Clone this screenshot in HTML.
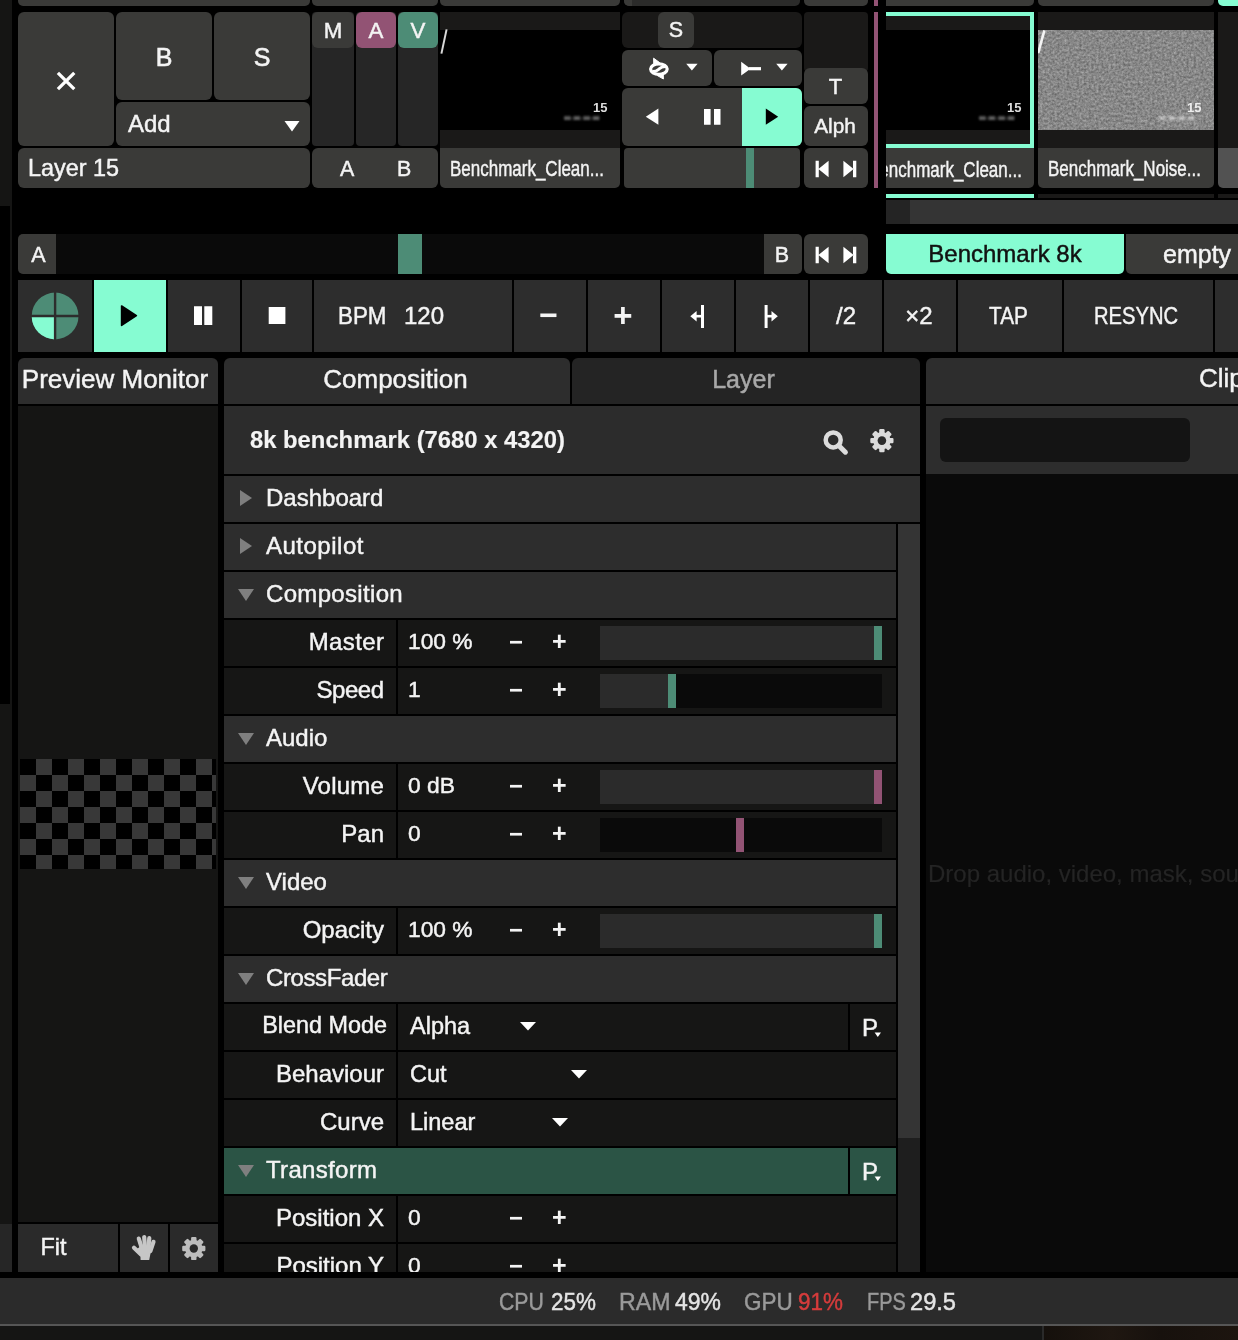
<!DOCTYPE html>
<html lang="en">
<head>
<meta charset="utf-8">
<title>Resolume Arena - 8k benchmark</title>
<style>
*{box-sizing:border-box;margin:0;padding:0}
html,body{width:1238px;height:1340px;background:#000;overflow:hidden}
body{will-change:transform;position:relative;font-family:"Liberation Sans",sans-serif;font-size:24px;color:#f4f4f4;line-height:1;-webkit-text-stroke:0.45px}
.ti{font-size:26px}
.a{position:absolute}
.c{display:flex;align-items:center;justify-content:center}
.l{display:flex;align-items:center;justify-content:flex-start}
.r{display:flex;align-items:center;justify-content:flex-end}
.btn{background:#3a3a38}
.dk{background:#1a1918}
.bar{background:#2d2d2d}
.row{background:#161615}
.mint{background:#86fcd2}
.grn{background:#4d8c76}
.pnk{background:#925374}
.r4{border-radius:6px}
.rb{border-radius:0 0 5px 5px}
.rt{border-radius:5px 5px 0 0}
.cond{display:inline-block;transform-origin:0 50%;white-space:nowrap}
svg{display:block}
.t{white-space:nowrap}
</style>
</head>
<body>
<!-- SECTION: left strip -->
<div class="a" style="left:0;top:0;width:12px;height:1340px;background:#151514"></div>
<div class="a" style="left:0;top:206px;width:10px;height:498px;background:#000"></div>
<div class="a" style="left:0;top:1224px;width:12px;height:48px;background:#262626"></div>
<!-- SECTION: top strip -->
<div class="a btn rb" style="left:18px;top:0;width:292px;height:6px"></div>
<div class="a btn rb" style="left:312px;top:0;width:126px;height:6px"></div>
<div class="a btn rb" style="left:440px;top:0;width:180px;height:6px"></div>
<div class="a rb" style="left:624px;top:0;width:176px;height:6px;background:#2b2b2a"></div>
<div class="a btn" style="left:624px;top:0;width:8px;height:6px;border-radius:0 0 0 5px"></div>
<div class="a btn rb" style="left:804px;top:0;width:64px;height:6px"></div>
<div class="a pnk" style="left:874px;top:0;width:4px;height:6px"></div>
<div class="a btn rb" style="left:886px;top:0;width:148px;height:6px;border-radius:0 0 5px 0"></div>
<div class="a btn rb" style="left:1038px;top:0;width:176px;height:6px"></div>
<div class="a mint" style="left:1218px;top:0;width:20px;height:6px;border-radius:0 0 0 5px"></div>
<!-- SECTION: layer -->
<div class="a btn r4" style="left:18px;top:12px;width:96px;height:134px">
<svg class="a" style="left:37px;top:58px" width="22" height="22" viewBox="0 0 22 22"><path d="M2.9 2.9 L19.3 19.1 M19.3 2.9 L2.9 19.1" stroke="#fff" stroke-width="3.3" fill="none"/></svg></div>
<div class="a btn r4 c t" style="left:116px;top:12px;width:96px;height:88px;font-size:25px;padding-top:3px;-webkit-text-stroke:0.6px">B</div>
<div class="a btn r4 c t" style="left:214px;top:12px;width:96px;height:88px;font-size:25px;padding-top:3px;-webkit-text-stroke:0.6px">S</div>
<div class="a btn r4 l t" style="left:116px;top:102px;width:194px;height:44px;padding-left:12px">Add
<svg class="a" style="left:168px;top:18px" width="16" height="12" viewBox="0 0 16 12"><path d="M0.5 1 H15.5 L8 11.5 Z" fill="#fff"/></svg></div>
<div class="a btn l t" style="left:18px;top:148px;width:292px;height:40px;padding:2px 0 0 10px;font-size:23.4px;border-radius:6px">Layer 15</div>
<div class="a" style="left:312px;top:12px;width:42px;height:134px;background:#262626;border-radius:4px"></div>
<div class="a" style="left:356px;top:12px;width:40px;height:134px;background:#262626;border-radius:4px"></div>
<div class="a" style="left:398px;top:12px;width:40px;height:134px;background:#262626;border-radius:4px"></div>
<div class="a btn r4 c t" style="left:312px;top:12px;width:42px;height:36px;font-size:22.3px;padding-top:2px">M</div>
<div class="a pnk r4 c t" style="left:356px;top:12px;width:40px;height:36px;font-size:22.3px;padding-top:2px">A</div>
<div class="a grn r4 c t" style="left:398px;top:12px;width:40px;height:36px;font-size:22.3px;padding-top:2px">V</div>
<div class="a btn t r4" style="left:312px;top:148px;width:126px;height:40px;font-size:21.4px">
<span class="a" style="left:28px;top:11px">A</span><span class="a" style="left:85px;top:11px">B</span></div>
<!-- layer thumb -->
<div class="a dk" style="left:440px;top:12px;width:180px;height:136px"></div>
<div class="a" style="left:440px;top:30px;width:180px;height:100px;background:#000"></div>
<div class="a t" style="left:593px;top:100px;font:700 13px 'Liberation Sans',sans-serif;color:#dcdcdc;filter:blur(.5px);-webkit-text-stroke:0">15</div>
<div class="a t" style="left:564px;top:115px;font:700 6px 'Liberation Mono',monospace;color:#aaa;filter:blur(.9px);-webkit-text-stroke:0;letter-spacing:-.4px">00:00:00:00</div>
<svg class="a" style="left:438px;top:27px" width="12" height="30" viewBox="438 27 12 30"><path d="M446.6 29.4 L441.4 53.6" stroke="#d8d8d8" stroke-width="2" filter="blur(.5px)"/></svg>
<div class="a btn l t" style="left:440px;top:148px;width:180px;height:40px;border-radius:0 0 5px 5px;padding:3px 0 0 10px;font-size:22.5px"><span class="cond" style="transform:scaleX(.755)">Benchmark_Clean...</span></div>
<!-- transport -->
<div class="a dk r4" style="left:622px;top:12px;width:180px;height:36px"></div>
<div class="a btn r4 c t" style="left:658px;top:12px;width:36px;height:36px;font-size:21.5px;padding-top:2px">S</div>
<div class="a btn r4" style="left:622px;top:50px;width:90px;height:36px"></div>
<div class="a btn r4" style="left:714px;top:50px;width:88px;height:36px"></div>
<div class="a btn r4" style="left:622px;top:88px;width:180px;height:58px"></div>
<div class="a mint" style="left:742px;top:88px;width:60px;height:58px;border-radius:0 6px 6px 0"></div>
<div class="a btn" style="left:624px;top:148px;width:176px;height:40px;border-radius:4px"></div>
<div class="a grn" style="left:746px;top:148px;width:8px;height:40px"></div>
<div class="a dk" style="left:804px;top:12px;width:64px;height:60px;border-radius:4px"></div>
<div class="a btn r4 c t" style="left:804px;top:68px;width:64px;height:36px;font-size:22px;padding-top:2px;padding-right:1px">T</div>
<div class="a btn r4 c t" style="left:804px;top:106px;width:64px;height:40px;font-size:20.8px;padding-top:1px;padding-right:2px">Alph</div>
<div class="a btn r4" style="left:804px;top:148px;width:64px;height:40px"></div>
<div class="a pnk" style="left:874px;top:12px;width:4px;height:176px"></div>
<!-- icons: transport -->
<svg class="a" style="left:646px;top:56px" width="26" height="26" viewBox="646 56 26 26"><ellipse cx="658.9" cy="69.1" rx="8.3" ry="5.3" fill="none" stroke="#fff" stroke-width="3.2"/><path d="M652.6 71.6 C656.4 71.4 657.6 70.2 658.9 69.1 C660.2 68 661.4 66.8 665.2 66.6" fill="none" stroke="#fff" stroke-width="3"/><path d="M653.6 58.2 L659.6 62.6 L653.8 65.8 Z M663.4 79 L657.4 75.6 L663.2 72.4 Z" fill="#fff" stroke="#fff" stroke-width="1" stroke-linejoin="round"/></svg>
<svg class="a" style="left:686px;top:63px" width="12" height="8" viewBox="0 0 12 8"><path d="M0.2 0.8 H11.6 L5.9 7.6 Z" fill="#fff"/></svg>
<svg class="a" style="left:740px;top:60px" width="22" height="18" viewBox="740 60 22 18"><path d="M741.2 61.8 L750.6 68.7 L741.2 75.6 Z" fill="#fff"/><path d="M749 68.7 H761" stroke="#fff" stroke-width="3.2"/></svg>
<svg class="a" style="left:776px;top:63px" width="12" height="8" viewBox="0 0 12 8"><path d="M0.2 0.8 H11.6 L5.9 7.6 Z" fill="#fff"/></svg>
<svg class="a" style="left:644px;top:107px" width="16" height="20" viewBox="644 107 16 20"><path d="M658.4 108.6 V124.8 L645.8 116.7 Z" fill="#fff"/></svg>
<svg class="a" style="left:703px;top:108px" width="19" height="18" viewBox="703 108 19 18"><path d="M704 109 H710.6 V124.7 H704 Z M714 109 H720.5 V124.7 H714 Z" fill="#fff"/></svg>
<svg class="a" style="left:764px;top:107px" width="16" height="20" viewBox="764 107 16 20"><path d="M765.8 108.6 V124.8 L778.2 116.7 Z" fill="#000"/></svg>
<svg class="a" style="left:814px;top:159px" width="44" height="20" viewBox="814 159 44 20"><path d="M815.6 160.7 H818.8 V177.2 H815.6 Z M828.6 160.7 V177.2 L818.4 169 Z M853 160.7 H856.3 V177.2 H853 Z M843.4 160.7 V177.2 L853.6 169 Z" fill="#fff"/></svg>
<!-- SECTION: clips -->
<div class="a dk" style="left:886px;top:12px;width:148px;height:136px"></div>
<div class="a" style="left:886px;top:30px;width:148px;height:100px;background:#000"></div>
<div class="a" style="left:886px;top:12px;width:148px;height:136px;border:4px solid #86fcd2;border-left:0"></div>
<div class="a btn t" style="left:886px;top:148px;width:148px;height:40px;border-radius:0 0 5px 0;overflow:hidden;font-size:22.5px"><span class="cond a" style="left:-17.6px;top:10.5px;transform:scaleX(.755)">Benchmark_Clean...</span></div>
<div class="a dk" style="left:1038px;top:12px;width:176px;height:136px"></div>
<svg class="a" style="left:1038px;top:30px" width="176" height="100" viewBox="0 0 176 100"><filter id="nz" x="0" y="0" width="100%" height="100%" color-interpolation-filters="sRGB"><feTurbulence type="fractalNoise" baseFrequency="0.41" numOctaves="3" seed="11"/><feColorMatrix type="matrix" values="0.36 0 0 0 0.35  0.36 0 0 0 0.35  0.36 0 0 0 0.35  0 0 0 0 1"/><feGaussianBlur stdDeviation="0.7"/></filter><rect width="176" height="100" fill="#868686"/><rect width="176" height="100" filter="url(#nz)"/><path d="M6.4 0.4 L0.2 23" stroke="#f4f4f4" stroke-width="2.6"/></svg>
<div class="a t" style="left:1187px;top:100px;font:700 13px 'Liberation Sans',sans-serif;color:#ececec;filter:blur(.5px);-webkit-text-stroke:0">15</div>
<div class="a t" style="left:1159px;top:115px;font:700 6px 'Liberation Mono',monospace;color:#e8e8e8;filter:blur(.9px);-webkit-text-stroke:0;letter-spacing:-.4px">00:00:00:00</div>
<div class="a t" style="left:1007px;top:100px;font:700 13px 'Liberation Sans',sans-serif;color:#dcdcdc;filter:blur(.5px);-webkit-text-stroke:0">15</div>
<div class="a t" style="left:979px;top:115px;font:700 6px 'Liberation Mono',monospace;color:#aaa;filter:blur(.9px);-webkit-text-stroke:0;letter-spacing:-.4px">00:00:00:00</div>
<div class="a btn l t" style="left:1038px;top:148px;width:176px;height:40px;border-radius:0 0 5px 5px;padding:3px 0 0 10px;font-size:22.5px"><span class="cond" style="transform:scaleX(.755)">Benchmark_Noise...</span></div>
<div class="a dk" style="left:1218px;top:12px;width:20px;height:136px"></div>
<div class="a" style="left:1218px;top:148px;width:20px;height:40px;background:#525252;border-radius:0 0 0 5px"></div>
<div class="a mint" style="left:886px;top:194px;width:148px;height:4px"></div>
<div class="a dk" style="left:1038px;top:194px;width:176px;height:4px"></div>
<div class="a dk" style="left:1218px;top:194px;width:20px;height:4px"></div>
<div class="a" style="left:886px;top:200px;width:352px;height:24px;background:#242424"></div>
<div class="a" style="left:910px;top:200px;width:328px;height:24px;background:#343434"></div>
<!-- SECTION: crossfader -->
<div class="a" style="left:18px;top:234px;width:784px;height:40px;background:#0a0a0a;border-radius:5px"></div>
<div class="a btn c t" style="left:18px;top:234px;width:38px;height:40px;border-radius:5px 0 0 5px;font-size:21.5px;padding-top:3px;padding-left:3px">A</div>
<div class="a grn" style="left:398px;top:234px;width:24px;height:40px"></div>
<div class="a btn c t" style="left:764px;top:234px;width:38px;height:40px;border-radius:0 5px 5px 0;font-size:21.5px;padding-top:3px;padding-right:2px">B</div>
<div class="a btn r4" style="left:804px;top:234px;width:64px;height:40px"></div>
<svg class="a" style="left:814px;top:245px" width="44" height="20" viewBox="814 159 44 20"><path d="M815.6 160.7 H818.8 V177.2 H815.6 Z M828.6 160.7 V177.2 L818.4 169 Z M853 160.7 H856.3 V177.2 H853 Z M843.4 160.7 V177.2 L853.6 169 Z" fill="#fff"/></svg>
<div class="a mint c t" style="left:886px;top:234px;width:238px;height:40px;border-radius:0 0 5px 5px;color:#111">Benchmark 8k</div>
<div class="a btn l t" style="left:1126px;top:234px;width:112px;height:40px;border-radius:0 0 0 5px;padding-left:37px;font-size:25px">empty</div>
<!-- SECTION: bpm -->
<div class="a bar" style="left:18px;top:280px;width:74px;height:72px"></div>
<div class="a mint" style="left:94px;top:280px;width:72px;height:72px"></div>
<div class="a bar" style="left:168px;top:280px;width:72px;height:72px"></div>
<div class="a bar" style="left:242px;top:280px;width:70px;height:72px"></div>
<div class="a bar t" style="left:314px;top:280px;width:198px;height:72px"><span class="a cond" style="left:24px;top:24px;transform:scaleX(.93)">BPM</span><span class="a" style="left:90px;top:24px">120</span></div>
<div class="a bar c t" style="left:514px;top:280px;width:72px;height:72px;font-weight:700;font-size:32px;-webkit-text-stroke:0;padding:0 3px 3px 0">&minus;</div>
<div class="a bar c t" style="left:588px;top:280px;width:72px;height:72px;font-weight:700;font-size:33px;-webkit-text-stroke:0;padding:0 2px 2px 0">+</div>
<div class="a bar" style="left:662px;top:280px;width:72px;height:72px"></div>
<div class="a bar" style="left:736px;top:280px;width:72px;height:72px"></div>
<div class="a bar c t" style="left:810px;top:280px;width:72px;height:72px">/2</div>
<div class="a bar c t" style="left:884px;top:280px;width:72px;height:72px;padding-right:2px">&times;2</div>
<div class="a bar c t" style="left:958px;top:280px;width:104px;height:72px;padding-right:4px"><span class="cond" style="transform-origin:50% 50%;transform:scaleX(.865)">TAP</span></div>
<div class="a bar c t" style="left:1064px;top:280px;width:149px;height:72px;padding-right:4px"><span class="cond" style="transform-origin:50% 50%;transform:scaleX(.84)">RESYNC</span></div>
<div class="a bar" style="left:1215px;top:280px;width:23px;height:72px"></div>
<!-- icons: bpm -->
<svg class="a" style="left:30px;top:291px" width="50" height="50" viewBox="30 291 50 50"><circle cx="55.1" cy="316" r="23.4" fill="#4d8c76"/><path d="M55.1 316 H31.7 A23.4 23.4 0 0 0 55.1 339.4 Z" fill="#86fcd2"/><path d="M55.1 292 V340 M31 316 H79.5" stroke="#2d2d2d" stroke-width="2.4"/></svg>
<svg class="a" style="left:119px;top:303px" width="20" height="26" viewBox="119 303 20 26"><path d="M121.6 306 V325.4 L136.4 315.7 Z" fill="#000" stroke="#000" stroke-width="1.6" stroke-linejoin="round"/></svg>
<svg class="a" style="left:193px;top:305px" width="21" height="22" viewBox="193 305 21 22"><path d="M194 306.3 H202 V325 H194 Z M204.3 306.3 H212.3 V325 H204.3 Z" fill="#fff"/></svg>
<svg class="a" style="left:267px;top:306px" width="20" height="20" viewBox="267 306 20 20"><path d="M268.7 307 H285.4 V324 H268.7 Z" fill="#fff"/></svg>
<svg class="a" style="left:688px;top:303px" width="20" height="28" viewBox="688 303 20 28"><path d="M702.5 305 V328" stroke="#fff" stroke-width="3"/><path d="M690.3 316.2 L696.6 311 V321.4 Z" fill="#fff"/><path d="M695 316.2 H702" stroke="#fff" stroke-width="2.6"/></svg>
<svg class="a" style="left:760px;top:303px" width="20" height="28" viewBox="760 303 20 28"><path d="M766.1 305 V328" stroke="#fff" stroke-width="3"/><path d="M777.8 316.2 L771.5 311 V321.4 Z" fill="#fff"/><path d="M766 316.2 H773" stroke="#fff" stroke-width="2.6"/></svg>
<!-- SECTION: preview -->
<div class="a bar c t ti" style="left:18px;top:358px;width:200px;height:46px;border-radius:6px 6px 0 0;padding:0 6px 4px 0">Preview Monitor</div>
<div class="a" style="left:18px;top:406px;width:200px;height:816px;background:#151514"></div>
<div class="a" id="chk" style="left:20px;top:759px;width:196px;height:110px;background-color:#000;background-image:conic-gradient(#383838 25%,#000 0 50%,#383838 0 75%,#000 0);background-size:32px 32px"></div>
<div class="a l t" style="left:18px;top:1224px;width:100px;height:48px;padding:0 0 1px 22.5px;font-size:23.4px;background:#2a2a2a">Fit</div>
<div class="a" style="left:120px;top:1224px;width:48px;height:48px;background:#2a2a2a"></div>
<div class="a" style="left:170px;top:1224px;width:48px;height:48px;background:#2a2a2a"></div>
<!-- icons: preview -->
<svg class="a" style="left:128px;top:1232px" width="32" height="32" viewBox="128 1232 32 32"><g stroke="#c6c6c6" stroke-width="4.2" stroke-linecap="round" fill="none"><path d="M138.8 1238.6 L142.4 1250"/><path d="M144.2 1237 L145.2 1250"/><path d="M149.3 1238.2 L148.2 1250"/><path d="M153.5 1241.8 L150.4 1251"/><path d="M134 1247.8 L141 1254.5"/></g><path d="M139.6 1247 L152.4 1247 L150.6 1253 L149.2 1260 L140.6 1260 L140.4 1256 L135.5 1250 Z" fill="#c6c6c6"/></svg>
<svg class="a" style="left:180px;top:1234px" width="28" height="28" viewBox="-13.8 -14.5 28 28"><g fill="#bdbdbd"><circle r="8.7"/><rect x="-2.7" y="-11.6" width="5.4" height="23.2" rx="1.2"/><rect x="-2.7" y="-11.6" width="5.4" height="23.2" rx="1.2" transform="rotate(45)"/><rect x="-2.7" y="-11.6" width="5.4" height="23.2" rx="1.2" transform="rotate(90)"/><rect x="-2.7" y="-11.6" width="5.4" height="23.2" rx="1.2" transform="rotate(135)"/></g><circle r="4.2" fill="#2a2a2a"/></svg>
<!-- SECTION: composition -->
<div class="a bar c t ti" style="left:224px;top:358px;width:346px;height:46px;border-radius:6px 6px 0 0;padding:0 3px 4px 0">Composition</div>
<div class="a c t ti" style="left:572px;top:358px;width:348px;height:46px;border-radius:6px 6px 0 0;background:#242424;color:#a8a8a8;font-size:25px;padding:0 5px 4px 0">Layer</div>
<div class="a l t" style="left:224px;top:406px;width:696px;height:68px;background:#2c2c2c;font-weight:700;font-size:23.8px;-webkit-text-stroke:0.15px;padding-left:26px">8k benchmark (7680 x 4320)</div>
<div class="a l t" style="left:224px;top:476px;width:696px;height:46px;background:#2d2d2d;padding:0 0 2px 42px"><svg class="a" style="left:16px;top:14px" width="12" height="16" viewBox="0 0 12 16"><path d="M0 0 V16 L12 8 Z" fill="#7f7f7f"/></svg>Dashboard</div>
<div class="a l t" style="left:224px;top:524px;width:672px;height:46px;background:#2d2d2d;padding:0 0 2px 42px"><svg class="a" style="left:16px;top:14px" width="12" height="16" viewBox="0 0 12 16"><path d="M0 0 V16 L12 8 Z" fill="#7f7f7f"/></svg><span style="letter-spacing:.5px">Autopilot</span></div>
<div class="a l t" style="left:224px;top:572px;width:672px;height:46px;background:#2d2d2d;padding:0 0 2px 42px"><svg class="a" style="left:14px;top:17px" width="16" height="12" viewBox="0 0 16 12"><path d="M0 0 H16 L8 12 Z" fill="#7f7f7f"/></svg><span style="letter-spacing:.33px">Composition</span></div>
<div class="a row r t" style="left:224px;top:620px;width:172px;height:46px;padding:0 12px 3px 0;font-size:24px;overflow:hidden"><span style="letter-spacing:.4px;margin-right:-.4px">Master</span></div>
<div class="a row t" style="left:398px;top:620px;width:498px;height:46px;overflow:hidden"><span class="a" style="left:10px;top:10.4px;font-size:22.8px">100 %</span><span class="a" style="left:111px;top:10px;font-weight:700;-webkit-text-stroke:0">&minus;</span><span class="a" style="left:154px;top:9px;font-weight:700;font-size:25px;-webkit-text-stroke:0">+</span><div class="a" style="left:202px;top:6px;width:282px;height:34px;background:#0a0a0a"></div><div class="a" style="left:202px;top:6px;width:282px;height:34px;background:#2b2b2b"></div><div class="a" style="left:476px;top:6px;width:8px;height:34px;background:#4d8c76"></div></div>
<div class="a row r t" style="left:224px;top:668px;width:172px;height:46px;padding:0 12px 3px 0;font-size:24px;overflow:hidden"><span style="letter-spacing:-.5px;margin-right:.5px">Speed</span></div>
<div class="a row t" style="left:398px;top:668px;width:498px;height:46px;overflow:hidden"><span class="a" style="left:10px;top:10.4px;font-size:22.8px">1</span><span class="a" style="left:111px;top:10px;font-weight:700;-webkit-text-stroke:0">&minus;</span><span class="a" style="left:154px;top:9px;font-weight:700;font-size:25px;-webkit-text-stroke:0">+</span><div class="a" style="left:202px;top:6px;width:282px;height:34px;background:#0a0a0a"></div><div class="a" style="left:202px;top:6px;width:72px;height:34px;background:#2b2b2b"></div><div class="a" style="left:270px;top:6px;width:8px;height:34px;background:#4d8c76"></div></div>
<div class="a l t" style="left:224px;top:716px;width:672px;height:46px;background:#2d2d2d;padding:0 0 2px 42px"><svg class="a" style="left:14px;top:17px" width="16" height="12" viewBox="0 0 16 12"><path d="M0 0 H16 L8 12 Z" fill="#7f7f7f"/></svg>Audio</div>
<div class="a row r t" style="left:224px;top:764px;width:172px;height:46px;padding:0 12px 3px 0;font-size:24px;overflow:hidden"><span style="letter-spacing:.2px">Volume</span></div>
<div class="a row t" style="left:398px;top:764px;width:498px;height:46px;overflow:hidden"><span class="a" style="left:10px;top:10.4px;font-size:22.8px">0 dB</span><span class="a" style="left:111px;top:10px;font-weight:700;-webkit-text-stroke:0">&minus;</span><span class="a" style="left:154px;top:9px;font-weight:700;font-size:25px;-webkit-text-stroke:0">+</span><div class="a" style="left:202px;top:6px;width:282px;height:34px;background:#0a0a0a"></div><div class="a" style="left:202px;top:6px;width:282px;height:34px;background:#2b2b2b"></div><div class="a" style="left:476px;top:6px;width:8px;height:34px;background:#925374"></div></div>
<div class="a row r t" style="left:224px;top:812px;width:172px;height:46px;padding:0 12px 3px 0;font-size:24px;overflow:hidden"><span>Pan</span></div>
<div class="a row t" style="left:398px;top:812px;width:498px;height:46px;overflow:hidden"><span class="a" style="left:10px;top:10.4px;font-size:22.8px">0</span><span class="a" style="left:111px;top:10px;font-weight:700;-webkit-text-stroke:0">&minus;</span><span class="a" style="left:154px;top:9px;font-weight:700;font-size:25px;-webkit-text-stroke:0">+</span><div class="a" style="left:202px;top:6px;width:282px;height:34px;background:#0a0a0a"></div><div class="a" style="left:338px;top:6px;width:8px;height:34px;background:#925374"></div></div>
<div class="a l t" style="left:224px;top:860px;width:672px;height:46px;background:#2d2d2d;padding:0 0 2px 42px"><svg class="a" style="left:14px;top:17px" width="16" height="12" viewBox="0 0 16 12"><path d="M0 0 H16 L8 12 Z" fill="#7f7f7f"/></svg>Video</div>
<div class="a row r t" style="left:224px;top:908px;width:172px;height:46px;padding:0 12px 3px 0;font-size:24px;overflow:hidden"><span>Opacity</span></div>
<div class="a row t" style="left:398px;top:908px;width:498px;height:46px;overflow:hidden"><span class="a" style="left:10px;top:10.4px;font-size:22.8px">100 %</span><span class="a" style="left:111px;top:10px;font-weight:700;-webkit-text-stroke:0">&minus;</span><span class="a" style="left:154px;top:9px;font-weight:700;font-size:25px;-webkit-text-stroke:0">+</span><div class="a" style="left:202px;top:6px;width:282px;height:34px;background:#0a0a0a"></div><div class="a" style="left:202px;top:6px;width:282px;height:34px;background:#2b2b2b"></div><div class="a" style="left:476px;top:6px;width:8px;height:34px;background:#4d8c76"></div></div>
<div class="a l t" style="left:224px;top:956px;width:672px;height:46px;background:#2d2d2d;padding:0 0 2px 42px"><svg class="a" style="left:14px;top:17px" width="16" height="12" viewBox="0 0 16 12"><path d="M0 0 H16 L8 12 Z" fill="#7f7f7f"/></svg><span style="letter-spacing:-.4px">CrossFader</span></div>
<div class="a row r t" style="left:224px;top:1004px;width:172px;height:46px;padding:0 9px 3px 0;font-size:23.4px"><span>Blend Mode</span></div>
<div class="a row t" style="left:398px;top:1004px;width:450px;height:46px"><span class="a" style="left:12px;top:10.5px;font-size:23.5px">Alpha</span><svg class="a" style="left:122px;top:18px" width="16" height="9" viewBox="0 0 16 9"><path d="M0 0 H16 L8 8.4 Z" fill="#fff"/></svg></div>
<div class="a row c t" style="left:850px;top:1004px;width:46px;height:46px"><span style="margin:2px 6px 0 0">P</span><svg class="a" style="left:24px;top:28px" width="8" height="6" viewBox="0 0 8 6"><path d="M0.6 0.4 H7 L3.8 5 Z" fill="#fff"/></svg></div>
<div class="a row r t" style="left:224px;top:1052px;width:172px;height:46px;padding:0 12px 3px 0;font-size:24px"><span>Behaviour</span></div>
<div class="a row t" style="left:398px;top:1052px;width:498px;height:46px"><span class="a" style="left:12px;top:10.5px;font-size:23.5px">Cut</span><svg class="a" style="left:173px;top:18px" width="16" height="9" viewBox="0 0 16 9"><path d="M0 0 H16 L8 8.4 Z" fill="#fff"/></svg></div>
<div class="a row r t" style="left:224px;top:1100px;width:172px;height:46px;padding:0 12px 3px 0;font-size:24px"><span>Curve</span></div>
<div class="a row t" style="left:398px;top:1100px;width:498px;height:46px"><span class="a" style="left:12px;top:10.5px;font-size:23.5px">Linear</span><svg class="a" style="left:154px;top:18px" width="16" height="9" viewBox="0 0 16 9"><path d="M0 0 H16 L8 8.4 Z" fill="#fff"/></svg></div>
<div class="a l t" style="left:224px;top:1148px;width:624px;height:46px;background:#2b5445;padding:0 0 2px 42px"><svg class="a" style="left:14px;top:17px" width="16" height="12" viewBox="0 0 16 12"><path d="M0 0 H16 L8 12 Z" fill="#7f7f7f"/></svg><span style="letter-spacing:.33px">Transform</span></div>
<div class="a c t" style="left:850px;top:1148px;width:46px;height:46px;background:#2b5445"><span style="margin:2px 6px 0 0">P</span><svg class="a" style="left:24px;top:28px" width="8" height="6" viewBox="0 0 8 6"><path d="M0.6 0.4 H7 L3.8 5 Z" fill="#fff"/></svg></div>
<div class="a row r t" style="left:224px;top:1196px;width:172px;height:46px;padding:0 12px 3px 0;font-size:24px;overflow:hidden"><span>Position X</span></div>
<div class="a row t" style="left:398px;top:1196px;width:498px;height:46px;overflow:hidden"><span class="a" style="left:10px;top:10.4px;font-size:22.8px">0</span><span class="a" style="left:111px;top:10px;font-weight:700;-webkit-text-stroke:0">&minus;</span><span class="a" style="left:154px;top:9px;font-weight:700;font-size:25px;-webkit-text-stroke:0">+</span></div>
<div class="a" style="left:224px;top:1244px;width:172px;height:28px;overflow:hidden"><div class="a row r t" style="left:0;top:0;width:172px;height:46px;padding:0 12px 3px 0;font-size:24px"><span>Position Y</span></div></div>
<div class="a row t" style="left:398px;top:1244px;width:498px;height:28px;overflow:hidden"><span class="a" style="left:10px;top:10.4px;font-size:22.8px">0</span><span class="a" style="left:111px;top:10px;font-weight:700;-webkit-text-stroke:0">&minus;</span><span class="a" style="left:154px;top:9px;font-weight:700;font-size:25px;-webkit-text-stroke:0">+</span></div>
<div class="a" style="left:898px;top:524px;width:22px;height:748px;background:#1e1e1e"></div>
<div class="a" style="left:898px;top:524px;width:22px;height:614px;background:#343434"></div>
<!-- icons: comp -->
<svg class="a" style="left:820px;top:427px" width="30" height="30" viewBox="820 427 30 30"><circle cx="833.2" cy="439.9" r="7.5" fill="none" stroke="#dcdcdc" stroke-width="4.5"/><path d="M839.4 446.2 L845.4 452.2" stroke="#dcdcdc" stroke-width="5" stroke-linecap="round"/></svg>
<svg class="a" style="left:868px;top:427px" width="28" height="28" viewBox="-13.9 -13.6 28 28"><g fill="#dcdcdc"><circle r="8.7"/><rect x="-2.7" y="-11.6" width="5.4" height="23.2" rx="1.2"/><rect x="-2.7" y="-11.6" width="5.4" height="23.2" rx="1.2" transform="rotate(45)"/><rect x="-2.7" y="-11.6" width="5.4" height="23.2" rx="1.2" transform="rotate(90)"/><rect x="-2.7" y="-11.6" width="5.4" height="23.2" rx="1.2" transform="rotate(135)"/></g><circle r="4.3" fill="#2c2c2c"/></svg>
<!-- SECTION: clip panel -->
<div class="a bar t ti" style="left:926px;top:358px;width:312px;height:116px;border-radius:6px 0 0 0"><span class="a" style="left:273px;top:7px">Clip</span></div>
<div class="a" style="left:926px;top:404px;width:312px;height:2px;background:#000"></div>
<div class="a" style="left:940px;top:418px;width:250px;height:44px;background:#141414;border-radius:6px"></div>
<div class="a t" style="left:926px;top:474px;width:312px;height:798px;background:#0a0a0a;color:#242424;-webkit-text-stroke:0.2px;overflow:hidden"><span class="a" style="left:2px;top:388px">Drop audio, video, mask, source</span></div>
<!-- SECTION: status -->
<div class="a" style="left:0;top:1272px;width:1238px;height:6px;background:#000"></div>
<div class="a bar t" style="left:0;top:1278px;width:1238px;height:48px;border-bottom:2px solid #565656;color:#9a9a9a;background:#2b2b2b">
<span class="a cond" style="left:499px;top:11.5px;transform:scaleX(.885)">CPU</span><span class="a cond" style="left:550.5px;top:11.5px;color:#e4e4e4;transform:scaleX(.935)">25%</span>
<span class="a cond" style="left:618.5px;top:11.5px;transform:scaleX(.965)">RAM</span><span class="a cond" style="left:675px;top:11.5px;color:#e4e4e4;transform:scaleX(.955)">49%</span>
<span class="a cond" style="left:743.5px;top:11.5px;transform:scaleX(.935)">GPU</span><span class="a cond" style="left:797.5px;top:11.5px;color:#d63c3c;transform:scaleX(.935)">91%</span>
<span class="a cond" style="left:866.8px;top:11.5px;transform:scaleX(.83)">FPS</span><span class="a cond" style="left:910px;top:11.5px;color:#e4e4e4;transform:scaleX(.985)">29.5</span>
</div>
<div class="a" style="left:0;top:1326px;width:1238px;height:14px;background:#151514"></div>
<div class="a" style="left:1042px;top:1326px;width:2px;height:14px;background:#2a2a2a"></div>
<div class="a" style="left:1044px;top:1326px;width:194px;height:14px;background:linear-gradient(90deg,#15100c,#1f1711 35%,#17110d 60%,#1d150f)"></div>
</body>
</html>
